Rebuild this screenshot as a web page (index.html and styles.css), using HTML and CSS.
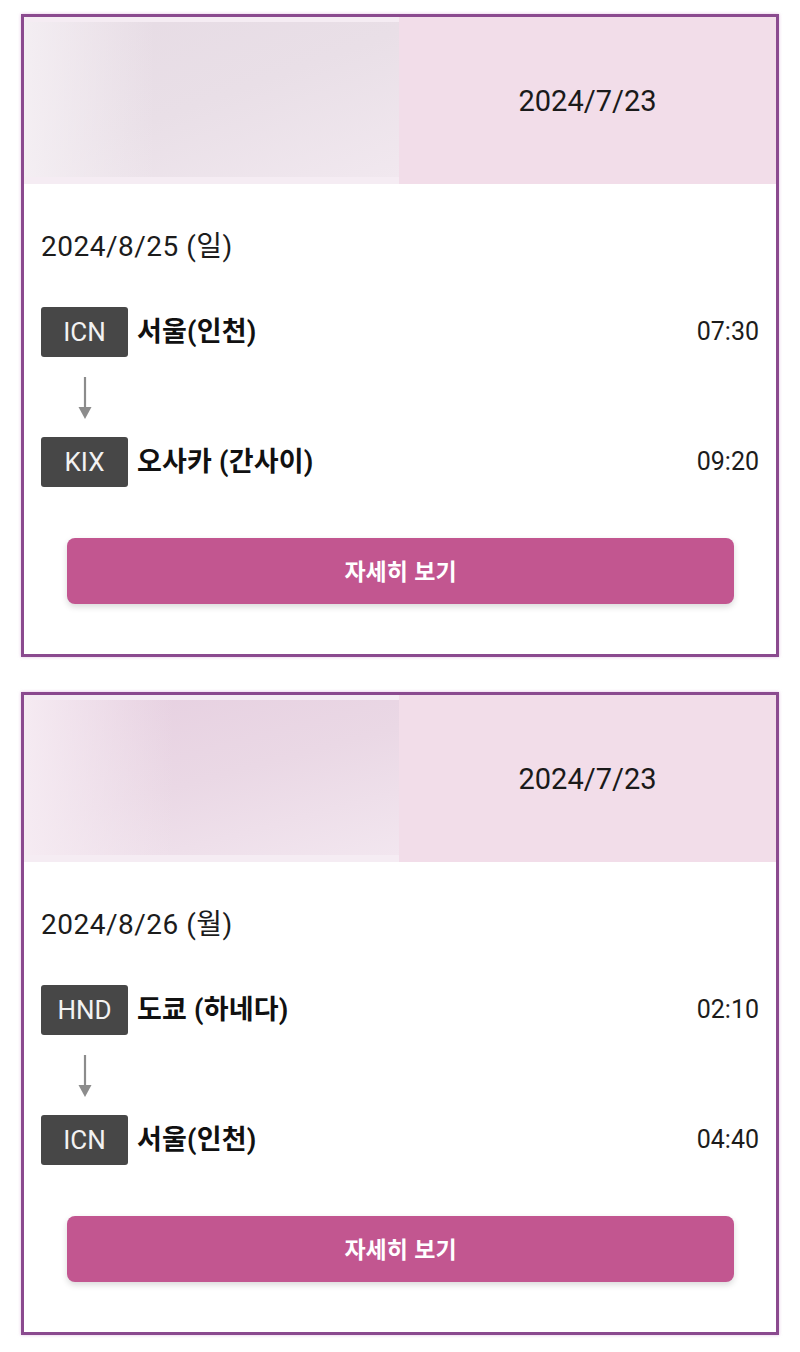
FILE: index.html
```html
<!DOCTYPE html>
<html lang="ko">
<head>
<meta charset="utf-8">
<link rel="stylesheet" href="styles.css">
</head>
<body>
<div class="card">
  <div class="card-head">
    <div class="thumb"><div class="thumb-img"></div></div>
    <div class="head-date">2024/7/23</div>
  </div>
  <div class="card-body">
    <div class="flight-date">2024/8/25 (일)</div>
    <div class="leg">
      <span class="code">ICN</span>
      <span class="city">서울(인천)</span>
      <span class="time">07:30</span>
    </div>
    <div class="arrow">
      <svg width="20" height="42" viewBox="0 0 20 42"><line x1="10" y1="0" x2="10" y2="32" stroke="#8c8c8c" stroke-width="2.2"/><polygon points="3.5,30 16.5,30 10,42" fill="#8c8c8c"/></svg>
    </div>
    <div class="leg">
      <span class="code">KIX</span>
      <span class="city">오사카 (간사이)</span>
      <span class="time">09:20</span>
    </div>
    <button class="detail">자세히 보기</button>
  </div>
</div>
<div class="card">
  <div class="card-head">
    <div class="thumb"><div class="thumb-img alt"></div></div>
    <div class="head-date">2024/7/23</div>
  </div>
  <div class="card-body">
    <div class="flight-date">2024/8/26 (월)</div>
    <div class="leg">
      <span class="code">HND</span>
      <span class="city">도쿄 (하네다)</span>
      <span class="time">02:10</span>
    </div>
    <div class="arrow">
      <svg width="20" height="42" viewBox="0 0 20 42"><line x1="10" y1="0" x2="10" y2="32" stroke="#8c8c8c" stroke-width="2.2"/><polygon points="3.5,30 16.5,30 10,42" fill="#8c8c8c"/></svg>
    </div>
    <div class="leg">
      <span class="code">ICN</span>
      <span class="city">서울(인천)</span>
      <span class="time">04:40</span>
    </div>
    <button class="detail">자세히 보기</button>
  </div>
</div>
</body>
</html>
```
FILE: styles.css
```css
html, body {
  margin: 0;
  padding: 0;
  background: #ffffff;
}
body {
  padding-top: 14px;
  font-family: Roboto, "Noto Sans CJK KR", sans-serif;
  color: #1a1a1a;
}
.card {
  margin: 0 21px 35px 21px;
  border: 3px solid #8b4a8f;
  box-shadow: 0 0 3px rgba(210, 150, 210, 0.6);
  background: #ffffff;
}
.card-head {
  height: 167px;
  display: grid;
  grid-template-columns: 375px 1fr;
}
.thumb {
  background: #f5ecf3;
  padding: 5px 0 7px 0;
  display: flex;
}
.thumb-img {
  flex: 1;
  background:
    linear-gradient(90deg, rgba(245,240,244,0.9) 0%, rgba(245,240,244,0) 35%),
    linear-gradient(160deg, #e6dbe4 0%, #e9dfe7 50%, #f1e8ef 100%);
}
.thumb-img.alt {
  background:
    linear-gradient(90deg, rgba(246,236,243,0.95) 0%, rgba(246,236,243,0) 40%),
    linear-gradient(165deg, #e6cfe0 0%, #ead8e5 50%, #f2e6ef 100%);
}
.head-date {
  background: #f2dde9;
  display: flex;
  align-items: center;
  justify-content: center;
  font-size: 29px;
  color: #1a1a1a;
}
.card-body {
  padding: 44px 17px 50px 17px;
}
.flight-date {
  font-size: 28px;
  letter-spacing: 0.5px;
  line-height: 36px;
  height: 36px;
  color: #1c1c1c;
  padding-top: 1px;
  box-sizing: border-box;
}
.leg {
  display: flex;
  align-items: center;
  height: 50px;
}
.flight-date + .leg {
  margin-top: 43px;
}
.code {
  width: 87px;
  height: 50px;
  background: #474747;
  color: #f2f2f2;
  border-radius: 3px;
  font-size: 26px;
  display: flex;
  align-items: center;
  justify-content: center;
}
.city {
  margin-left: 9px;
  font-size: 27px;
  letter-spacing: 0.2px;
  font-weight: 700;
  color: #111111;
  flex: 1;
  padding-bottom: 5px;
}
.time {
  font-size: 25px;
  color: #1c1c1c;
  padding-bottom: 1px;
}
.arrow {
  height: 80px;
  box-sizing: border-box;
  padding: 20px 0 0 34px;
}
.arrow svg {
  display: block;
}
.detail {
  display: block;
  margin: 51px 25px 0 26px;
  width: calc(100% - 51px);
  height: 66px;
  border: none;
  border-radius: 8px;
  background: #c25690;
  color: #ffffff;
  font-family: "Noto Sans CJK KR", Roboto, sans-serif;
  font-size: 23px;
  font-weight: 700;
  box-shadow: 0 3px 6px rgba(0, 0, 0, 0.15);
  padding: 0 0 2px 0;
}
```
